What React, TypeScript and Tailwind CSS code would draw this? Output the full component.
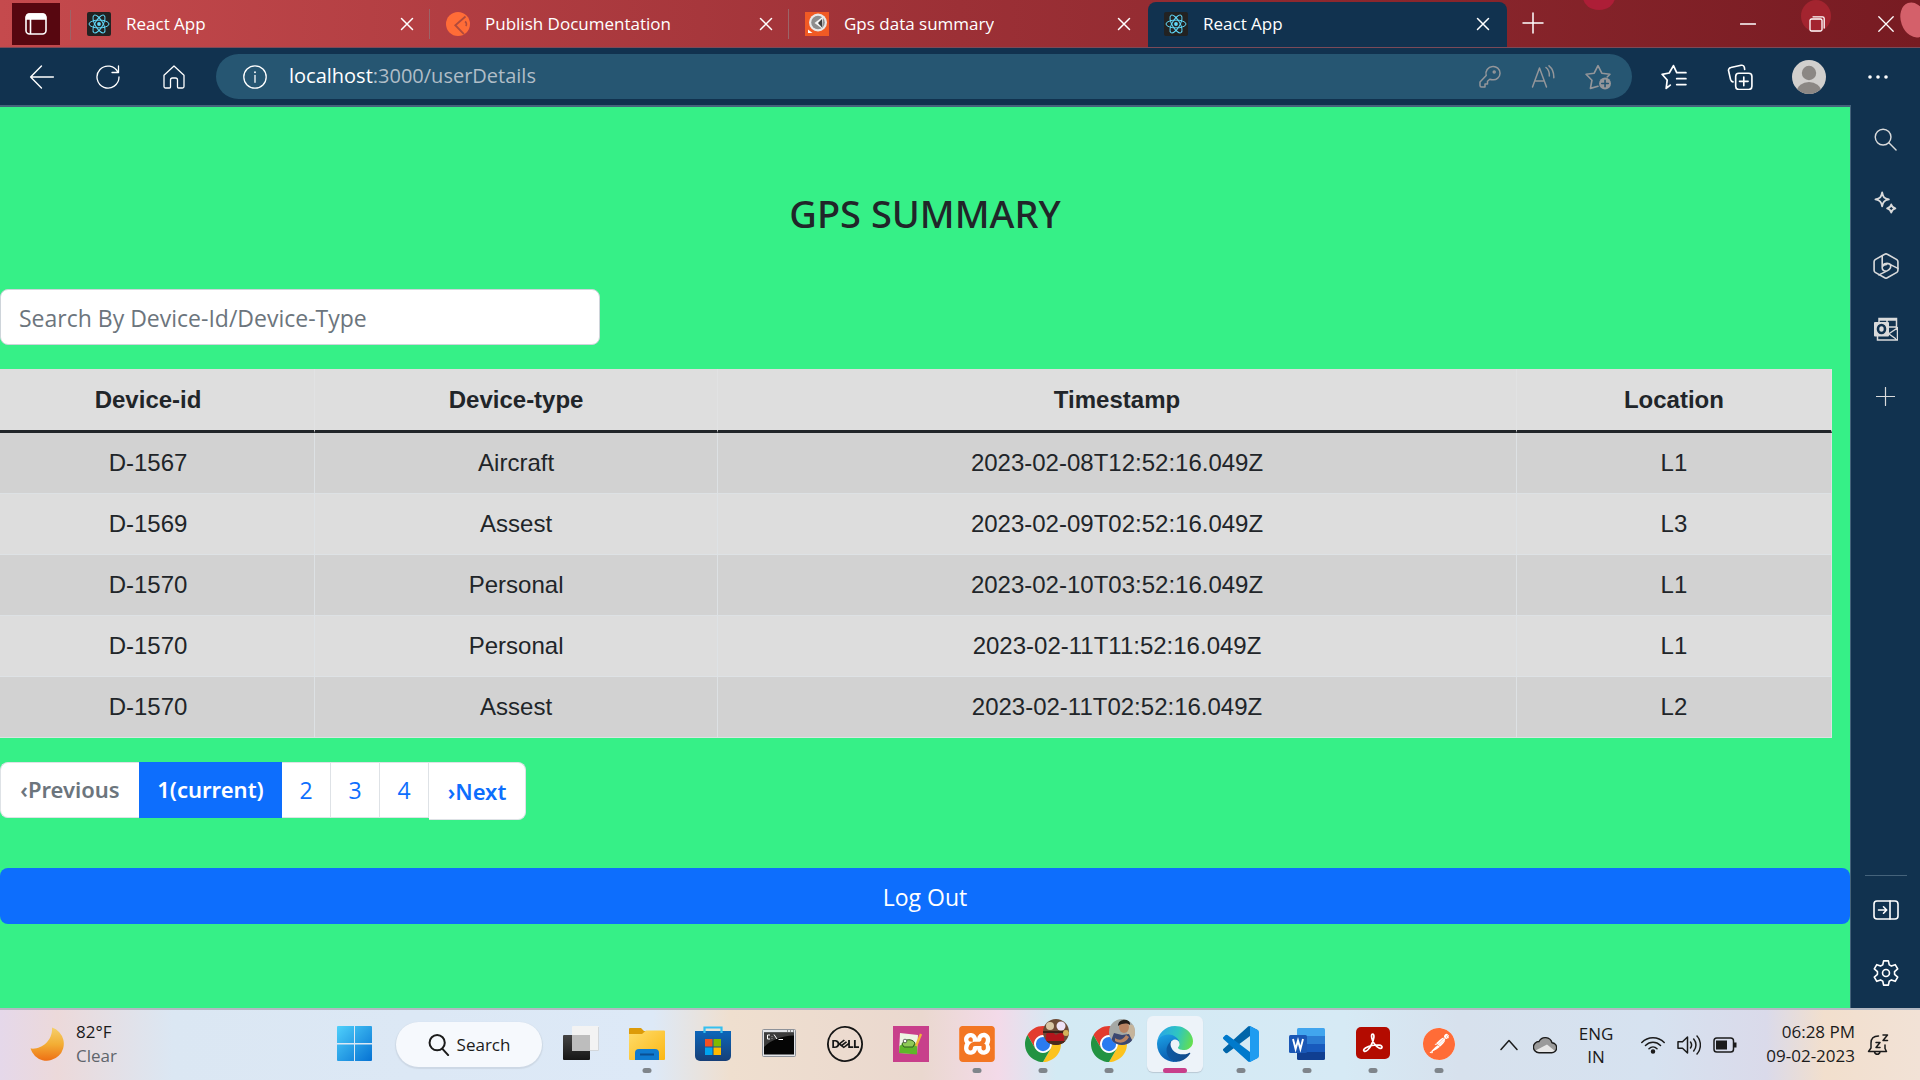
import type { ReactNode } from "react";
import { SiDell, SiPostman, SiXampp } from "react-icons/si";

const ui = "font-['Open_Sans','Noto_Sans',sans-serif]";

type IconProps = { className?: string; children: ReactNode; box?: string; stroke?: number };

function Line({ className = "size-6", children, box = "0 0 24 24", stroke = 1.3 }: IconProps) {
  return (
    <svg
      className={className}
      viewBox={box}
      fill="none"
      stroke="currentColor"
      strokeWidth={stroke}
      strokeLinecap="round"
      strokeLinejoin="round"
      aria-hidden="true"
    >
      {children}
    </svg>
  );
}

function ReactFavicon() {
  return (
    <svg className="size-6 shrink-0" viewBox="0 0 24 24" aria-hidden="true">
      <rect width="24" height="24" rx="2" fill="#222" />
      <g fill="none" stroke="#61dafb" strokeWidth="1">
        <ellipse cx="12" cy="12" rx="10" ry="3.9" />
        <ellipse cx="12" cy="12" rx="10" ry="3.9" transform="rotate(60 12 12)" />
        <ellipse cx="12" cy="12" rx="10" ry="3.9" transform="rotate(120 12 12)" />
      </g>
      <circle cx="12" cy="12" r="1.9" fill="#61dafb" />
    </svg>
  );
}

function PublishFavicon() {
  return (
    <svg className="size-6 shrink-0" viewBox="0 0 24 24" aria-hidden="true">
      <circle cx="12" cy="12" r="12" fill="#ff6c37" />
      <path d="M19.5 4.5 9.3 13.2l8.6 9" fill="none" stroke="#b04a3c" strokeWidth="1.8" />
      <path d="M19 9.5c1.5 1 2 3 .8 4.5" fill="none" stroke="#b04a3c" strokeWidth="1.6" />
    </svg>
  );
}

function GpsFavicon() {
  return (
    <svg className="size-6 shrink-0" viewBox="0 0 24 24" aria-hidden="true">
      <rect width="24" height="24" fill="#f15a24" />
      <circle cx="13" cy="10.5" r="9" fill="#e8e8e8" />
      <circle cx="13" cy="10.5" r="6.8" fill="#8d8d8d" />
      <path d="M18 4.5 9.5 11l7.5 5.5" fill="#f4f4f4" />
      <path d="M17 7l-4 4 4 4.5z" fill="#3d3d3d" />
      <path d="M3 17.5 7.5 21H3z" fill="#fff" />
    </svg>
  );
}

function CloseGlyph({ className = "size-4" }: { className?: string }) {
  return (
    <Line className={className} box="0 0 16 16" stroke={1.5}>
      <path d="M2.5 2.5l11 11M13.5 2.5l-11 11" />
    </Line>
  );
}

function Tab({ icon, title, active, divider }: { icon: ReactNode; title: string; active?: boolean; divider?: boolean }) {
  return (
    <div
      className={
        active
          ? "mt-0.5 flex min-w-0 flex-1 items-center rounded-t-lg bg-[#11324f] px-4 pb-0.5"
          : "mt-0.5 flex min-w-0 flex-1 items-center px-4 pb-0.5"
      }
    >
      <a href="#tab" className="flex min-w-0 flex-1 items-center gap-[15px] text-white">
        {icon}
        <span className="truncate text-[17px] leading-6">{title}</span>
      </a>
      <button type="button" aria-label={`Close ${title}`} className="text-white">
        <CloseGlyph />
      </button>
      {divider && <span className="-mr-4 ml-3.5 h-[30px] w-px bg-[#9c6468]" />}
    </div>
  );
}

function TabStrip() {
  return (
    <header className="relative flex h-12 overflow-hidden border-b border-[#7b4a58] bg-linear-to-r from-[#c54a4d] via-[#9c3036] to-[#771b22]">
      <svg className="absolute top-0 right-0 h-12 w-[420px]" viewBox="0 0 420 48" aria-hidden="true">
        <ellipse cx="99" cy="-3" rx="16" ry="13" fill="#ad1e37" />
        <ellipse cx="316" cy="16" rx="15" ry="16" fill="#a3242f" />
        <ellipse cx="414" cy="20" rx="13" ry="18" fill="#d4606a" transform="rotate(-20 414 20)" />
      </svg>
      <div className="relative flex min-w-0 flex-1">
        <button
          type="button"
          aria-label="Tab actions"
          className="mt-[3px] ml-3 grid h-[42px] w-12 shrink-0 place-items-center bg-[#570710] text-white"
        >
          <svg className="size-6" viewBox="0 0 24 24" fill="none" stroke="currentColor" strokeWidth="1.6" aria-hidden="true">
            <rect x="2" y="2" width="20" height="20" rx="3.5" />
            <path d="M2.5 7V5a3 3 0 0 1 3-3h13a3 3 0 0 1 3 3v2z" fill="currentColor" />
            <path d="M6.5 7v15" />
          </svg>
        </button>
        <span className="mt-2.5 ml-[10px] h-[30px] w-px bg-[#9c6468]" />
        <nav aria-label="Tabs" className="flex w-[1436px] min-w-0">
          <Tab icon={<ReactFavicon />} title="React App" divider />
          <Tab icon={<PublishFavicon />} title="Publish Documentation" divider />
          <Tab icon={<GpsFavicon />} title="Gps data summary" />
          <Tab icon={<ReactFavicon />} title="React App" active />
        </nav>
        <button type="button" aria-label="New tab" className="ml-3.5 pb-px text-white">
          <Line className="size-6" box="0 0 24 24" stroke={1.5}>
            <path d="M12 2v20M2 12h20" />
          </Line>
        </button>
      </div>
      <div className="relative flex text-white">
        <button type="button" aria-label="Minimize" className="grid w-[69px] place-items-center">
          <Line className="size-4" box="0 0 16 16">
            <path d="M.5 8h15" />
          </Line>
        </button>
        <button type="button" aria-label="Restore" className="grid w-[69px] place-items-center">
          <Line className="size-4" box="0 0 16 16">
            <rect x="1" y="3" width="12" height="12" rx="1.5" />
            <path d="M4 .8h9.500a1.700 1.700 0 0 1 1.700 1.700V12" />
          </Line>
        </button>
        <button type="button" aria-label="Close window" className="grid w-[69px] place-items-center">
          <Line className="size-4" box="0 0 16 16">
            <path d="M.8.8l14.400 14.400M15.200.8.8 15.200" />
          </Line>
        </button>
      </div>
    </header>
  );
}

function Toolbar() {
  const nav = "grid h-[57px] w-[66px] place-items-center";
  return (
    <div className="flex h-[57px] items-center bg-[#11324f] text-white">
      <div className="flex pl-[9px]">
        <button type="button" aria-label="Back" className={nav}>
          <Line className="size-[26px]">
            <path d="M22.500 12h-21M11.500 1.800 1.500 12l10 10.200" />
          </Line>
        </button>
        <button type="button" aria-label="Refresh" className={nav}>
          <Line className="size-6">
            <path d="M22 7.500A11 11 0 1 0 23 12M22.500 1v6.500H16" />
          </Line>
        </button>
        <button type="button" aria-label="Home" className={nav}>
          <Line className="size-6">
            <path d="M2 10.200 12 1l10 9.200V21.500a1.500 1.500 0 0 1-1.500 1.500h-4a1 1 0 0 1-1-1v-7a2 2 0 0 0-2-2h-3a2 2 0 0 0-2 2v7a1 1 0 0 1-1 1h-4A1.500 1.500 0 0 1 2 21.500z" />
          </Line>
        </button>
      </div>
      <form className="ml-[9px] flex h-[45px] min-w-0 flex-1 items-center rounded-full bg-[#265672] pr-[21px] pl-[27px]">
        <button type="button" aria-label="View site information">
          <Line className="size-6">
            <circle cx="12" cy="12" r="11.200" />
            <path d="M12 10.500v6.800" stroke="currentColor" />
            <path d="M12 7.200v.1" strokeWidth="1.900" />
          </Line>
        </button>
        <a href="#address" className="ml-[22px] flex-1 truncate pb-px text-[20px] leading-7 text-[#b0bdc7]">
          <span className="text-white">localhost</span>:3000/userDetails
        </a>
        <div className="flex items-center gap-[30px] text-[#94969a]">
          <button type="button" aria-label="Saved passwords">
            <Line className="size-6" stroke={1.5}>
              <circle cx="17.200" cy="7" r="1" />
              <path d="M15.500 1.500a7 7 0 0 0-6.300 9L3 17v3.500A1.500 1.500 0 0 0 4.500 22H8v-3h2.500v-2.700l2.300-2a7 7 0 0 0 2.700.5 6.700 6.700 0 1 0 0-13.300z" />
            </Line>
          </button>
          <button type="button" aria-label="Read aloud">
            <Line className="size-6" stroke={1.5}>
              <path d="M1.500 22 8.500 3l7 19M4 16h9M15 2.500c2.500 2 3.500 5 3.300 8.500M18 .8c3.300 2.700 5 7 4.800 12" />
            </Line>
          </button>
          <button type="button" aria-label="Add to favorites">
            <Line className="size-[26px]" stroke={1.5}>
              <path d="M12 20.500 5 22.500l1.400-7.500L1 9.500l7.500-1L12 1.500l3.500 7 7.500 1-2.500 2.500" />
              <circle cx="18.500" cy="18" r="5.500" fill="currentColor" stroke="none" />
              <path d="M18.500 15v6M15.500 18h6" stroke="#265672" />
            </Line>
          </button>
        </div>
      </form>
      <div className="flex items-center px-[9px]">
        <button type="button" aria-label="Favorites" className={nav}>
          <Line className="size-[26px]" stroke={1.6}>
            <path d="M8.500 19.500 4.800 22.500l.9-7.700L1 9.500l6.600-1.200L11.500 1.500l3 6.500h8.500M14.500 13.500H23M14.500 19H23" />
          </Line>
        </button>
        <button type="button" aria-label="Collections" className={nav}>
          <Line className="size-[26px]" stroke={1.5}>
            <rect x="8" y="8.500" width="15" height="15" rx="3" />
            <path d="M15.500 12v8M11.500 16h8M5.500 16.500C4 16 3.500 15 3.200 14L1.500 6.500A2.500 2.500 0 0 1 3.500 3.300L13 1.200c1.500-.3 2.700.4 3 1.800l.3 2" />
          </Line>
        </button>
        <button type="button" aria-label="Profile" className="grid h-[57px] w-[72px] place-items-center">
          <svg className="size-[34px]" viewBox="0 0 34 34" aria-hidden="true">
            <clipPath id="avatar">
              <circle cx="17" cy="17" r="17" />
            </clipPath>
            <g clipPath="url(#avatar)">
              <rect width="34" height="34" fill="#d1cfcd" />
              <circle cx="17" cy="13" r="7.200" fill="#8b8784" />
              <ellipse cx="17" cy="31" rx="12" ry="9" fill="#8b8784" />
            </g>
          </svg>
        </button>
        <button type="button" aria-label="Settings and more" className={nav}>
          <svg className="h-1 w-5" viewBox="0 0 20 4" fill="currentColor" aria-hidden="true">
            <circle cx="2" cy="2" r="1.800" />
            <circle cx="10" cy="2" r="1.800" />
            <circle cx="18" cy="2" r="1.800" />
          </svg>
        </button>
      </div>
    </div>
  );
}

const rows = [
  ["D-1567", "Aircraft", "2023-02-08T12:52:16.049Z", "L1"],
  ["D-1569", "Assest", "2023-02-09T02:52:16.049Z", "L3"],
  ["D-1570", "Personal", "2023-02-10T03:52:16.049Z", "L1"],
  ["D-1570", "Personal", "2023-02-11T11:52:16.049Z", "L1"],
  ["D-1570", "Assest", "2023-02-11T02:52:16.049Z", "L2"],
];

function GpsTable() {
  return (
    <div className="mt-6 pr-[18px]">
      <table className="w-full table-fixed border-separate border-spacing-0 text-center font-['Liberation_Sans',Arial,sans-serif] text-2xl leading-9 text-[#212529]">
        <colgroup>
          <col className="w-[17.2%]" />
          <col className="w-[22%]" />
          <col className="w-[43.6%]" />
          <col className="w-[17.2%]" />
        </colgroup>
        <thead className="bg-[#dedede]">
          <tr>
            {["Device-id", "Device-type", "Timestamp", "Location"].map((h) => (
              <th
                key={h}
                scope="col"
                className="border-r border-b-[3px] border-r-[#e1e2e3] border-b-[#212529] pt-[13px] pb-3 font-bold first:pr-[18px]"
              >
                {h}
              </th>
            ))}
          </tr>
        </thead>
        <tbody>
          {rows.map((row) => (
            <tr key={row[2]} className="odd:bg-[#d2d2d2] even:bg-[#dddddd]">
              {row.map((cell, j) => (
                <td key={j} className="border-r border-b border-[#dee2e6]/90 py-3 first:pr-[18px]">
                  {cell}
                </td>
              ))}
            </tr>
          ))}
        </tbody>
      </table>
    </div>
  );
}

function Pagination() {
  return (
    <nav aria-label="Pages" className="mt-6">
      <ul className="flex items-start">
        <li>
          <button
            type="button"
            disabled
            className="h-14 min-w-[139px] rounded-l-lg border border-r-0 border-[#dee2e6] bg-white pb-0.5 font-['Noto_Sans',sans-serif] text-[22px] leading-[52px] font-semibold text-[#6c757d]"
          >
            ‹Previous
          </button>
        </li>
        <li>
          <button
            type="button"
            aria-current="page"
            className="h-14 min-w-[143px] bg-[#0d6efd] pb-0.5 font-['Noto_Sans',sans-serif] text-[22px] leading-[54px] font-semibold text-white"
          >
            1(current)
          </button>
        </li>
        {["2", "3", "4"].map((n) => (
          <li key={n}>
            <button
              type="button"
              className="h-14 min-w-[49px] border-y border-r border-[#dee2e6] bg-white pt-px text-[23px] leading-[53px] text-[#0d6efd]"
            >
              {n}
            </button>
          </li>
        ))}
        <li>
          <button
            type="button"
            className="h-[58px] min-w-[97px] rounded-r-lg border border-l-0 border-[#dee2e6] bg-white font-['Noto_Sans',sans-serif] text-[22px] leading-[56px] font-semibold text-[#0d6efd]"
          >
            ›Next
          </button>
        </li>
      </ul>
    </nav>
  );
}

function Page() {
  return (
    <main className="min-w-0 flex-1 border-r border-[#45637b] bg-[#36f087]">
      <h1 className="pt-[81px] text-center font-['Noto_Sans',sans-serif] text-[38px] leading-[50px] font-medium text-[#212529]">
        GPS SUMMARY
      </h1>
      <div className="mt-[51px] w-[600px] max-w-full">
        <input
          type="search"
          aria-label="Search By Device-Id/Device-Type"
          placeholder="Search By Device-Id/Device-Type"
          className="block h-14 w-full rounded-lg border border-[#ced4da] bg-white px-[18px] pt-0.5 text-[23px] text-[#212529] placeholder:text-[#6c757d]"
        />
      </div>
      <GpsTable />
      <Pagination />
      <button type="button" className="mt-12 block h-14 w-full rounded-lg bg-[#0d6efd] pt-0.5 text-[23px] text-white">
        Log Out
      </button>
    </main>
  );
}

function Sidebar() {
  const slot = "grid h-[63px] w-full place-items-center";
  return (
    <aside aria-label="Sidebar" className="flex w-[69px] shrink-0 flex-col bg-[#11324f] pt-[3px] text-[#d9dadb]">
      <button type="button" aria-label="Search" className={slot}>
        <Line className="size-[23px]" stroke={1.5}>
          <circle cx="9.500" cy="9.500" r="8.200" />
          <path d="M15.500 15.500 23 23" />
        </Line>
      </button>
      <button type="button" aria-label="Discover" className={slot}>
        <Line className="size-[23px]" stroke={1.9}>
          <path d="M8.500 1.500c1 5 2 6 7 7.300-5 1.200-6 2.200-7 7.200-1-5-2-6-7-7.200 5-1.300 6-2.300 7-7.300zM18 14c.7 2.700 1.500 3.500 4.300 4.200-2.800.7-3.600 1.500-4.300 4.300-.7-2.800-1.500-3.600-4.300-4.300C16.500 17.500 17.300 16.700 18 14z" />
        </Line>
      </button>
      <button type="button" aria-label="Bing" className={slot}>
        <Line className="size-[26px]" stroke={1.5}>
          <path d="M12 .8a2 2 0 0 1 1.200.3l8.800 5c.7.5 1 1.200 1 2v7.800c0 .8-.3 1.500-1 2l-8.800 5a2.300 2.300 0 0 1-2.400 0l-8.800-5c-.7-.5-1-1.200-1-2V8.100c0-.8.3-1.500 1-2l8.800-5A2 2 0 0 1 12 .8z" />
          <path d="M8.500 2.800V13.500c0 1.800 1.500 3 3.500 3.200M5.500 20.200l7.500-3.700c3-1.300 3.800-3.500 3-5.300M23 14.200l-6-3c-2.500-2-6-1.800-8.500.2M8.700 12.500c1-1.500 2.300-2 3.800-2" />
        </Line>
      </button>
      <button type="button" aria-label="Outlook" className={slot}>
        <svg className="size-6" viewBox="0 0 24 24" fill="none" stroke="currentColor" strokeWidth="1.500" aria-hidden="true">
          <path d="M5 5V1.500h17.500V13M5 3h17M13 3v8M13 10h9M3.500 19v4h20V11l-9 6M15 17l8.500 6" />
          <rect x="0" y="5" width="15" height="14.500" rx="1" fill="currentColor" stroke="none" />
          <ellipse cx="7.500" cy="12" rx="3.500" ry="4" stroke="#11324f" strokeWidth="2.600" />
        </svg>
      </button>
      <button type="button" aria-label="Customize" className="grid h-[72px] w-full place-items-center">
        <Line className="size-[19px]" box="0 0 19 19" stroke={1.2}>
          <path d="M9.500.5v18M.5 9.500h18" />
        </Line>
      </button>
      <div className="mt-auto pb-1 text-white">
        <hr className="mx-auto mb-0.5 w-[42px] border-[#45637b]" />
        <button type="button" aria-label="Hide sidebar" className={slot}>
          <Line className="h-5 w-[26px]" box="0 0 26 20" stroke={1.6}>
            <rect x="1" y="1" width="24" height="18" rx="3" />
            <path d="M17 1v18M5.500 10h8M10.500 6.800l3.200 3.200-3.200 3.200" />
          </Line>
        </button>
        <button type="button" aria-label="Settings" className={slot}>
          <Line className="size-[26px]" stroke={1.5}>
            <circle cx="12" cy="12" r="3.200" />
            <path d="M9.800.8h4.400l.8 3.700 2 1.100 3.500-1.300 2.300 3.900-2.900 2.600v2.400l2.900 2.600-2.300 3.900-3.500-1.300-2 1.100-.8 3.700H9.800L9 19.500l-2-1.100-3.500 1.300-2.300-3.900 2.900-2.600v-2.400L1.200 8.200l2.300-3.900L7 5.600l2-1.100z" />
          </Line>
        </button>
      </div>
    </aside>
  );
}

function ChromeIcon() {
  return (
    <svg className="size-9" viewBox="0 0 48 48" aria-hidden="true">
      <circle cx="24" cy="24" r="12" fill="#fff" />
      <path d="M24 12h20.780a24 24 0 0 0-41.560 0L13.610 30A12 12 0 0 1 24 12z" fill="#e33b2e" />
      <path d="M34.390 30 24 48a24 24 0 0 0 20.780-36H24a12 12 0 0 1 10.390 18z" fill="#fcc31e" />
      <path d="M13.610 30 3.220 12A24 24 0 0 0 24 48l10.390-18a12 12 0 0 1-20.780 0z" fill="#229342" />
      <circle cx="24" cy="24" r="9.500" fill="#2a7bf0" />
    </svg>
  );
}

function PartyAvatar() {
  return (
    <svg className="absolute -top-[7px] left-[18px] size-[26px]" viewBox="0 0 26 26" aria-hidden="true">
      <clipPath id="party">
        <circle cx="13" cy="13" r="13" />
      </clipPath>
      <g clipPath="url(#party)">
        <rect width="26" height="26" fill="#6d4a35" />
        <circle cx="7" cy="7" r="4" fill="#d9c6a4" />
        <circle cx="18" cy="7" r="4.500" fill="#efe3f6" />
        <path d="M3 15c6-4 8 0 10 1 3-2 6-3 8 0v8H3z" fill="#b3141c" />
        <path d="M0 12h26v2H0z" fill="#3d2018" />
        <circle cx="23" cy="14" r="3" fill="#d6b25a" />
        <path d="M0 22h26v4H0z" fill="#4a2a1c" />
      </g>
    </svg>
  );
}

function PersonAvatar() {
  return (
    <svg className="absolute -top-[7px] left-[18px] size-[26px]" viewBox="0 0 26 26" aria-hidden="true">
      <clipPath id="person">
        <circle cx="13" cy="13" r="13" />
      </clipPath>
      <g clipPath="url(#person)">
        <rect width="26" height="26" fill="#a5a9a6" />
        <path d="M18 6h8v14h-8z" fill="#c5b49c" />
        <ellipse cx="15" cy="8" rx="5" ry="6" fill="#b98363" />
        <path d="M9 7c0-8 13-8 12-1-3-2-7-2-12 1z" fill="#241c1a" />
        <path d="M0 27 5 14l8 2 7-1 6 12z" fill="#3b4770" />
        <path d="M6 19c4 3 8 2 11-3l3 2c-3 6-9 7-14 4z" fill="#b98363" />
      </g>
    </svg>
  );
}

function TaskSlot({ label, children, running }: { label: string; children: ReactNode; running?: boolean }) {
  return (
    <button type="button" aria-label={label} className="relative grid h-[70px] w-[66px] shrink-0 place-items-center">
      <span className="relative -mt-0.5">{children}</span>
      {running && <span className="absolute bottom-[7px] left-1/2 h-[5px] w-[9px] -translate-x-1/2 rounded-full bg-[#7f858b]" />}
    </button>
  );
}

function TaskApps() {
  return (
    <div className="flex min-w-0 flex-1 justify-center">
      <TaskSlot label="Start">
        <svg className="size-9" viewBox="0 0 36 36" aria-hidden="true">
          <defs>
            <linearGradient id="win" x1="0" y1="0" x2="1" y2="1">
              <stop offset="0" stopColor="#4fd0fb" />
              <stop offset="1" stopColor="#0672d3" />
            </linearGradient>
          </defs>
          <path
            d="M1 0h16v17H0V1a1 1 0 0 1 1-1zM18 0h16a1 1 0 0 1 1 1v16H18zM0 18.500h17V35H1a1 1 0 0 1-1-1zM18 18.500h17V34a1 1 0 0 1-1 1H18z"
            fill="url(#win)"
          />
        </svg>
      </TaskSlot>
      <button
        type="button"
        className="mt-3 mr-[6px] ml-2 flex h-[45px] w-[146px] items-center justify-center gap-[7px] rounded-full bg-[#f6f9fd] text-[17px] text-[#1b1b1b] shadow-[0_1px_1px_1px_#cdd8e5]"
      >
        <Line className="size-[22px]" stroke={2.2}>
          <circle cx="10" cy="9.500" r="8.300" />
          <path d="M15.500 16 22 23" />
        </Line>
        Search
      </button>
      <div className="flex">
        <TaskSlot label="Task view">
          <svg className="size-9" viewBox="0 0 36 36" aria-hidden="true">
            <defs>
              <linearGradient id="tvd" x1="0" y1="0" x2="0" y2="1">
                <stop offset="0" stopColor="#444" />
                <stop offset="1" stopColor="#161616" />
              </linearGradient>
            </defs>
            <rect x="0" y="9" width="27" height="25" rx="1" fill="url(#tvd)" />
            <rect x="9" y="0" width="27" height="25" rx="1" fill="#f3f3f3" />
            <path d="M9 24.500h26.500V1" fill="none" stroke="#d3d7db" />
            <rect x="9" y="9" width="18" height="16" fill="#bdbdbd" />
          </svg>
        </TaskSlot>
        <TaskSlot label="File Explorer" running>
          <svg className="size-9" viewBox="0 0 36 36" aria-hidden="true">
            <defs>
              <linearGradient id="fold" x1="0" y1="0" x2="1" y2="1">
                <stop offset="0" stopColor="#ffdc6b" />
                <stop offset="1" stopColor="#fbb714" />
              </linearGradient>
            </defs>
            <path d="M0 3a1 1 0 0 1 1-1h11l3 3h20v5H0z" fill="#dd9b09" />
            <path d="M0 8h13l4-3.500h18a1 1 0 0 1 1 1V33a1 1 0 0 1-1 1H1a1 1 0 0 1-1-1z" fill="url(#fold)" />
            <path d="M6 34v-7a4 4 0 0 1 4-4h16a4 4 0 0 1 4 4v7z" fill="#0f7bd0" />
            <rect x="11" y="27.500" width="14" height="2" fill="#0a4f92" />
          </svg>
        </TaskSlot>
        <TaskSlot label="Microsoft Store">
          <svg className="size-9" viewBox="0 0 36 36" aria-hidden="true">
            <defs>
              <linearGradient id="store" x1="0" y1="0" x2="0" y2="1">
                <stop offset="0" stopColor="#0c66ba" />
                <stop offset="1" stopColor="#173f77" />
              </linearGradient>
            </defs>
            <path d="M0 5h36v25a5 5 0 0 1-5 5H5a5 5 0 0 1-5-5z" fill="url(#store)" />
            <path d="M9.500 7V1.500h17V7" fill="none" stroke="#35c0f0" strokeWidth="2.200" />
            <path d="M10 13h7.500v7.500H10z" fill="#f25022" />
            <path d="M18.500 13H26v7.500h-7.500z" fill="#7fba00" />
            <path d="M10 21.500h7.500V29H10z" fill="#00a4ef" />
            <path d="M18.500 21.500H26V29h-7.500z" fill="#ffb900" />
          </svg>
        </TaskSlot>
        <TaskSlot label="Command Prompt">
          <svg className="size-9" viewBox="0 0 36 36" aria-hidden="true">
            <rect x="1.500" y="3.500" width="33" height="27" rx="1" fill="#e2e4e8" stroke="#8e9299" />
            <rect x="3" y="6.500" width="30" height="22" fill="#050505" />
            <path d="M3 6.500h30v3C20 10 10 14 3 21z" fill="#3c3c3c" />
            <path d="M9 9H6.500v4H9M11 10v.5M11 12.500v.5M13 8.500l3 4.500M17.500 13.500H22" fill="none" stroke="#fff" />
            <path d="M26 5h1M29 5h1M32 5h1" stroke="#333" />
          </svg>
        </TaskSlot>
        <TaskSlot label="Dell">
          <SiDell className="size-9 text-[#161616]" />
        </TaskSlot>
        <TaskSlot label="Notepad++">
          <svg className="size-9" viewBox="0 0 36 36" aria-hidden="true">
            <rect width="36" height="36" fill="#c83f8b" />
            <path d="M7 7l18 2-1 19-18-1z" fill="#eef5e4" />
            <path d="M6.500 20c5-4 12-3 17.800-2L24 28.500 6 27z" fill="#5fb62a" />
            <path d="M9 18c2-5 10-6 13-1l-2 4h-9z" fill="#8fc957" stroke="#2f5a20" />
            <circle cx="12" cy="15" r="1.800" fill="#fff" stroke="#333" strokeWidth=".7" />
            <path d="M28 8 23 20" stroke="#f2b53a" strokeWidth="2.400" />
          </svg>
        </TaskSlot>
        <TaskSlot label="XAMPP" running>
          <span className="block rounded-md bg-white">
            <SiXampp className="size-9 text-[#f37623]" />
          </span>
        </TaskSlot>
        <TaskSlot label="Chrome, first profile" running>
          <ChromeIcon />
          <PartyAvatar />
        </TaskSlot>
        <TaskSlot label="Chrome, second profile" running>
          <ChromeIcon />
          <PersonAvatar />
        </TaskSlot>
        <button type="button" aria-label="Microsoft Edge" className="grid h-[70px] w-[66px] shrink-0 place-items-center">
          <span className="relative -mt-0.5 grid h-14 w-14 place-items-center rounded-md bg-[#edf3f9] shadow-[0_1px_1px_#b9c8d4]">
            <svg className="size-9" viewBox="0 0 256 256" aria-hidden="true">
              <defs>
                <linearGradient id="ed1" x1="60" y1="0" x2="230" y2="0" gradientUnits="userSpaceOnUse">
                  <stop offset="0" stopColor="#0c59a4" />
                  <stop offset="1" stopColor="#114a8b" />
                </linearGradient>
                <linearGradient id="ed2" x1="0" y1="80" x2="60" y2="250" gradientUnits="userSpaceOnUse">
                  <stop offset="0" stopColor="#1b9de2" />
                  <stop offset="1" stopColor="#0a5cb0" />
                </linearGradient>
                <linearGradient id="ed3" x1="20" y1="60" x2="250" y2="130" gradientUnits="userSpaceOnUse">
                  <stop offset="0" stopColor="#2aa8e4" />
                  <stop offset=".5" stopColor="#2fc6c0" />
                  <stop offset="1" stopColor="#66e04b" />
                </linearGradient>
              </defs>
              <path
                d="M231.100 190.500c-3.400 1.800-6.900 3.400-10.500 4.700a101.900 101.900 0 0 1-35.900 6.500c-47.300 0-88.500-32.500-88.500-74.300a31.500 31.500 0 0 1 16.400-27.300c-42.800 1.800-53.800 46.400-53.800 72.500 0 73.900 68.100 81.400 82.800 81.400 7.900 0 19.800-2.300 27-4.600l1.300-.4a128.300 128.300 0 0 0 66.600-52.800 4 4 0 0 0-5.400-5.700z"
                fill="url(#ed1)"
              />
              <path
                d="M105.700 241.400a79.200 79.200 0 0 1-22.700-21.300 80.700 80.700 0 0 1 29.500-120c3.200-1.500 8.500-4.100 15.600-4a32.400 32.400 0 0 1 25.700 13 31.900 31.900 0 0 1 6.300 18.700c0-.2 24.500-79.600-80-79.600-43.900 0-80 41.700-80 78.200a130.200 130.200 0 0 0 12.100 56 128 128 0 0 0 156.400 67 75.500 75.500 0 0 1-62.800-8z"
                fill="url(#ed2)"
              />
              <path
                d="M152.300 148.900c-.9 1-3.400 2.500-3.400 5.600 0 2.600 1.700 5.200 4.800 7.300 14.300 10 41.400 8.600 41.500 8.600a59.600 59.600 0 0 0 30.300-8.300 61.400 61.400 0 0 0 30.400-52.900c.3-22.400-8-37.300-11.300-43.900C223.500 23.900 177.700 0 128 0A128 128 0 0 0 0 126.200c.5-36.500 36.800-66 80-66 3.500 0 23.500.3 42 10.100 16.300 8.600 24.900 18.900 30.800 29.200 6.200 10.700 7.300 24.100 7.300 29.500s-2.700 13.300-7.800 19.900z"
                fill="url(#ed3)"
              />
            </svg>
            <span className="absolute -bottom-px left-4 h-[5px] w-6 rounded-full bg-[#c83f8b]" />
          </span>
        </button>
        <TaskSlot label="Visual Studio Code" running>
          <svg className="size-9" viewBox="0 0 100 100" aria-hidden="true">
            <path d="M96 11 76 1a6 6 0 0 0-7 1L1.500 63.500a4.200 4.200 0 0 0 0 6.200l5.500 5a4.200 4.200 0 0 0 5.300.2L76 27z" fill="#0065a9" />
            <path d="M96 89 76 99a6 6 0 0 1-7-1L1.500 36.500a4.200 4.200 0 0 1 0-6.200l5.500-5a4.200 4.200 0 0 1 5.300-.2L76 73z" fill="#007acc" />
            <path d="M76 99a6 6 0 0 1-7-1c2.300 2.300 6 .7 6-2.600V4.700c0-3.300-3.900-4.900-6.200-2.600a6 6 0 0 1 7.200-1.100l20.500 10A6.200 6.200 0 0 1 100 16.500v67a6.200 6.200 0 0 1-3.500 5.600z" fill="#1f9cf0" />
          </svg>
        </TaskSlot>
        <TaskSlot label="Word" running>
          <svg className="size-9" viewBox="0 0 36 36" aria-hidden="true">
            <path d="M8 3.500A1.500 1.500 0 0 1 9.500 2h25A1.500 1.500 0 0 1 36 3.500V10H8z" fill="#41a5ee" />
            <path d="M8 10h28v8H8z" fill="#2b7cd3" />
            <path d="M8 18h28v8H8z" fill="#185abd" />
            <path d="M8 26h28v6.500a1.500 1.500 0 0 1-1.500 1.500h-25A1.500 1.500 0 0 1 8 32.500z" fill="#103f91" />
            <rect x="0" y="9" width="18" height="18" rx="1.500" fill="#1a57b5" />
            <path d="M4 13l2.600 10L9 14.500 11.400 23 14 13" fill="none" stroke="#fff" strokeWidth="1.900" />
          </svg>
        </TaskSlot>
        <TaskSlot label="Acrobat" running>
          <svg className="size-9" viewBox="0 0 36 36" aria-hidden="true">
            <rect x="1" y="1" width="34" height="32" rx="5" fill="#b30b00" />
            <path
              d="M17.500 8c2.500 0 1.500 5.500-1 10.500-2.200 4.500-5.500 8-7.500 6.500-1.800-1.800 3-4.500 8-5.500 5.500-1 10.500-.5 10 1.800-.5 2.500-5 .2-7.500-3.300C17 15.500 15.500 8 17.500 8z"
              fill="none"
              stroke="#fff"
              strokeWidth="1.700"
            />
          </svg>
        </TaskSlot>
        <TaskSlot label="Postman" running>
          <span className="block rounded-full bg-white">
            <SiPostman className="size-8 text-[#ff6c37]" />
          </span>
        </TaskSlot>
      </div>
    </div>
  );
}

function Tray() {
  return (
    <div className="flex w-[428px] shrink-0 items-center text-[17px] leading-6 text-[#1b1b1b]">
      <button type="button" aria-label="Show hidden icons" className="ml-2">
        <Line className="h-3 w-[18px]" box="0 0 18 12" stroke={1.5}>
          <path d="M1 10.500l8-9 8 9" />
        </Line>
      </button>
      <button type="button" aria-label="OneDrive" className="ml-[15px]">
        <svg className="h-[18px] w-6" viewBox="0 0 24 18" aria-hidden="true">
          <path d="M6 5.500a7 7 0 0 1 13 1.200 5 5 0 0 1-.7 10H6A5.500 5.500 0 0 1 6 5.500z" fill="#9a9a9a" />
          <path d="M2.500 14.500 14 8.500l8 6.500-3 2H5z" fill="#e6e6e6" />
          <path d="M6 5.500a7 7 0 0 1 13 1.200 5 5 0 0 1-.7 10H6A5.500 5.500 0 0 1 6 5.500z" fill="none" stroke="#1b1b1b" strokeWidth="1.400" />
        </svg>
      </button>
      <button type="button" className="ml-[21px] w-9 text-center leading-[23px]">
        ENG
        <br />
        IN
      </button>
      <button type="button" aria-label="Network, volume and battery" className="ml-[27px] flex items-center gap-3">
        <Line className="h-[18px] w-6" box="0 0 24 18" stroke={1.5}>
          <path d="M.8 6.500C7 .2 17 .2 23.200 6.500M4.500 9.500c4.300-4.200 10.700-4.200 15 0M8 12.700c2.300-2.200 5.700-2.200 8 0" />
          <circle cx="12" cy="15.500" r="1.500" fill="currentColor" />
        </Line>
        <Line className="h-5 w-6" box="0 0 24 20" stroke={1.5}>
          <path d="M1 6.800h4.500L10.500 2v16l-5-4.800H1zM13.500 7c1.300 1.800 1.300 4.200 0 6M16.700 4c3 3.500 3 8.500 0 12M20 1c4.500 5 4.500 13 0 18" />
        </Line>
        <svg className="h-4 w-6" viewBox="0 0 24 16" fill="none" stroke="currentColor" strokeWidth="1.500" aria-hidden="true">
          <rect x="1" y="1" width="19.500" height="14" rx="2.800" />
          <rect x="3" y="3.500" width="11" height="9" fill="currentColor" stroke="none" />
          <path d="M22 5.500v5" strokeWidth="3" />
        </svg>
      </button>
      <button type="button" className="ml-auto pb-0.5 text-right">
        06:28 PM
        <br />
        09-02-2023
      </button>
      <button type="button" aria-label="Notifications snoozed" className="mr-[31px] ml-3">
        <Line className="size-[22px]" box="0 0 22 22" stroke={1.5}>
          <path d="M11.500 2C6.500 2 4 5 4 9v5L1.500 17.500h18L18 14.500V11M7.500 18c.8 3 4.700 3 5.500 0" />
          <path d="M9 8.500h4l-4 5h4M16 1h4.500L16 6.500h4.500" />
        </Line>
      </button>
    </div>
  );
}

function Taskbar() {
  return (
    <footer className="flex h-[72px] border-t-2 border-[#b3b8c2] bg-[linear-gradient(90deg,#e5d8ea_0%,#ecd9da_3%,#dbe7f3_9%,#dde9f7_34%,#efdfcf_38%,#ead8cf_48%,#f3dae9_52%,#d3eaf4_55%,#d6eaf5_70%,#d7e1ed_76%,#d6e2f0_86%,#dadaea_92%,#f2dfcd_95%,#f2e2d6_100%)]">
      <button type="button" className="flex w-[302px] shrink-0 items-center pb-0.5 pl-[29px] text-left text-[17px] leading-6 text-[#1b1b1b]">
        <svg className="h-9 w-9" viewBox="0 0 36 36" aria-hidden="true">
          <defs>
            <linearGradient id="moon" x1="0" y1="0" x2="0" y2="1">
              <stop offset="0" stopColor="#f5cf6b" />
              <stop offset=".5" stopColor="#f3ae35" />
              <stop offset="1" stopColor="#ee7014" />
            </linearGradient>
          </defs>
          <path d="M23 1.500A17 17 0 1 1 1.500 22.500C13 24 24 14 23 1.500z" fill="url(#moon)" />
        </svg>
        <span className="ml-[11px]">
          82°F
          <br />
          <span className="text-[#5f656c]">Clear</span>
        </span>
      </button>
      <TaskApps />
      <Tray />
    </footer>
  );
}

export default function App() {
  return (
    <div className={`flex min-h-screen flex-col bg-[#11324f] ${ui}`}>
      <TabStrip />
      <Toolbar />
      <div className="flex flex-1">
        <div className="flex min-w-0 flex-1 border-t-2 border-[#45637b]">
          <Page />
        </div>
        <Sidebar />
      </div>
      <Taskbar />
    </div>
  );
}
